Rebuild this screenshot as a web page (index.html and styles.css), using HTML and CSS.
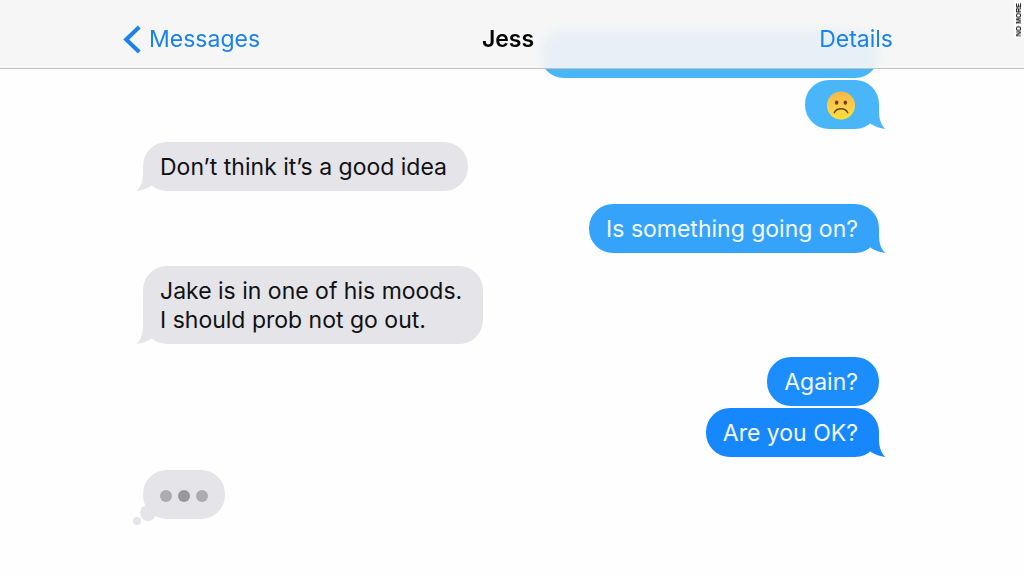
FILE: index.html
```html
<!DOCTYPE html>
<html lang="en">
<head>
<meta charset="utf-8">
<meta name="viewport" content="width=device-width, initial-scale=1">
<title>Jess</title>
<link rel="stylesheet" href="styles.css">
</head>
<body>
<svg class="defs" aria-hidden="true">
  <symbol id="tail" viewBox="0 0 30 24">
    <path d="M23 0V6C23 14 25 20 29.500 24C24 23.500 19 21.500 15 19L6 8Z" fill="currentColor"/>
  </symbol>
</svg>
<header class="bar">
  <a class="back" href="#messages">
    <svg class="chevron" viewBox="0 0 18 30" aria-hidden="true"><path d="M16.500 2L3 15L16.500 28" fill="none" stroke="currentColor" stroke-width="4.200"/></svg>
    <span>Messages</span>
  </a>
  <h1 class="title">Jess</h1>
  <a class="details" href="#details">Details</a>
</header>
<span class="tag">NO MORE</span>
<main class="thread">
  <div class="bubble sent early cut"></div>
  <div class="bubble sent early follow">
    <svg class="face" viewBox="0 0 30 30" role="img" aria-label="Frowning face">
      <defs><linearGradient id="skin" x1="0" y1="0" x2="0" y2="1"><stop offset="0" stop-color="#f6b646"/><stop offset=".5" stop-color="#fbcb4c"/><stop offset="1" stop-color="#ffe234"/></linearGradient></defs>
      <circle cx="15" cy="15" r="14.500" fill="url(#skin)"/>
      <ellipse cx="10.500" cy="12" rx="1.800" ry="2.300" fill="#6b4410"/>
      <ellipse cx="19.500" cy="12" rx="1.800" ry="2.300" fill="#6b4410"/>
      <path d="M8 22.500C10.500 17 19.500 17 22 22.500" fill="none" stroke="#6b4410" stroke-width="1.500" stroke-linecap="round"/>
    </svg>
    <svg class="tail" aria-hidden="true"><use href="#tail"/></svg>
  </div>
  <p class="bubble received">Don’t think it’s a good idea<svg class="tail" aria-hidden="true"><use href="#tail"/></svg></p>
  <p class="bubble sent middle">Is something going on?<svg class="tail" aria-hidden="true"><use href="#tail"/></svg></p>
  <p class="bubble received">Jake is in one of his moods.<br>I should prob not go out.<svg class="tail" aria-hidden="true"><use href="#tail"/></svg></p>
  <p class="bubble sent late">Again?</p>
  <p class="bubble sent latest follow">Are you OK?<svg class="tail" aria-hidden="true"><use href="#tail"/></svg></p>
  <div class="bubble received typing" role="status" aria-label="Jess is typing">
    <span class="dot"></span><span class="dot strong"></span><span class="dot"></span>
    <svg class="puffs" viewBox="0 0 24 24" aria-hidden="true"><circle cx="16" cy="12" r="8" fill="currentColor"/><circle cx="5" cy="20" r="4" fill="currentColor"/></svg>
  </div>
</main>
</body>
</html>
```
FILE: styles.css
```css
* {
  box-sizing: border-box;
}

body {
  margin: 0;
  background: #fefefe;
  color: #111114;
  font-family: Inter, "Liberation Sans", sans-serif;
  font-size: 23px;
  line-height: 29px;
}

.defs {
  display: none;
}

.bar {
  position: absolute;
  z-index: 1;
  top: 0;
  left: 0;
  right: 0;
  display: grid;
  grid-template-columns: 1fr auto 1fr;
  align-items: center;
  padding: 25px 131px 14px 123px;
  border-bottom: 1px solid #c2c2c4;
  background: rgba(245, 245, 245, 0.92);
  backdrop-filter: blur(5px);
}

.back,
.details {
  color: #1a82ea;
  text-decoration: none;
}

.back {
  display: flex;
  align-items: center;
  gap: 8px;
}

.chevron {
  width: 18px;
  height: 29px;
}

.title {
  margin: 0;
  color: #050505;
  font-size: 23px;
  font-weight: 600;
}

.details {
  justify-self: end;
}

.tag {
  position: absolute;
  z-index: 2;
  top: 0;
  right: 0;
  padding: 2px 1px 3px;
  background: #fff;
  color: #000;
  font-family: "Liberation Sans", sans-serif;
  font-size: 7px;
  font-weight: 700;
  line-height: 8px;
  writing-mode: vertical-rl;
  transform: rotate(180deg);
}

.thread {
  display: flex;
  flex-direction: column;
  align-items: flex-start;
  gap: 13px;
  padding: 29px 145px 48px 143px;
}

.bubble {
  position: relative;
  margin: 0;
  min-height: 49px;
  padding: 11px 21px 9px 17px;
  border-radius: 24px;
}

.sent {
  align-self: flex-end;
  color: #f4fbff;
}

.received {
  background: #e4e4e9;
}

.follow {
  margin-top: -11px;
}

.early {
  background: #49b6fa;
}

.middle {
  background: #36a3fb;
}

.late {
  background: #1b8dfd;
}

.latest {
  background: #1787fe;
}

.cut {
  width: 46%;
}

.early .face {
  display: block;
  width: 30px;
  height: 29px;
  margin: 0 2px 0 4px;
}

.tail {
  position: absolute;
  right: -7px;
  bottom: 0;
  width: 30px;
  height: 24px;
}

.early .tail {
  color: #49b6fa;
}

.middle .tail {
  color: #36a3fb;
}

.latest .tail {
  color: #1787fe;
}

.received .tail {
  right: auto;
  left: -7px;
  color: #e4e4e9;
  transform: scaleX(-1);
}

.typing {
  display: flex;
  align-items: center;
  gap: 6px;
  padding: 11px 17px 9px;
}

.dot {
  width: 12px;
  height: 12px;
  border-radius: 50%;
  background: #acacb0;
}

.strong {
  background: #98989c;
}

.puffs {
  position: absolute;
  left: -11px;
  bottom: -6px;
  width: 24px;
  height: 24px;
  color: #e4e4e9;
}
```
